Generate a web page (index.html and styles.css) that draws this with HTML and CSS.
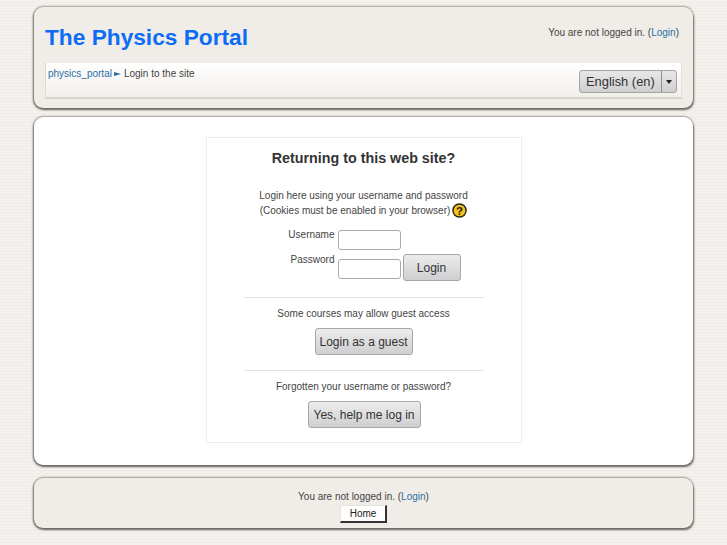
FILE: index.html
```html
<!DOCTYPE html>
<html lang="en">
<head>
<meta charset="utf-8">
<title>The Physics Portal: Login to the site</title>
<link rel="stylesheet" href="styles.css">
</head>
<body>
<header class="panel header">
  <div class="headermain">
    <h1 class="sitename">The Physics Portal</h1>
    <div class="logininfo">You are not logged in. (<a href="#">Login</a>)</div>
  </div>
  <div class="navbar">
    <div class="crumbs"><a href="#">physics_portal</a><span class="sep"></span>Login to the site</div>
    <div class="langmenu"><span class="langlabel">English (en)</span><span class="langarrow"><span class="caret"></span></span></div>
  </div>
</header>
<main class="panel content">
  <section class="loginbox">
    <h2 class="logintitle">Returning to this web site?</h2>
    <div class="intro">
      <p class="introline">Login here using your username and password</p>
      <p class="introline">(Cookies must be enabled in your browser)
        <svg class="helpicon" width="15" height="15" viewBox="0 0 16 16" aria-hidden="true">
          <circle cx="8" cy="8" r="7" fill="#f3c21f" stroke="#2b2412" stroke-width="1.5"/>
          <text x="8" y="12.5" text-anchor="middle" class="helpmark">?</text>
        </svg>
      </p>
    </div>
    <form class="loginform">
      <div class="labels">
        <label class="fieldlabel">Username</label>
        <label class="fieldlabel">Password</label>
      </div>
      <div class="inputs">
        <input class="field" type="text">
        <input class="field" type="password">
      </div>
      <button class="btn loginbtn" type="button">Login</button>
    </form>
    <hr class="rule">
    <p class="note">Some courses may allow guest access</p>
    <button class="btn guestbtn" type="button">Login as a guest</button>
    <hr class="rule rule2">
    <p class="note">Forgotten your username or password?</p>
    <button class="btn helpbtn" type="button">Yes, help me log in</button>
  </section>
</main>
<footer class="panel footer">
  <div class="logininfo">You are not logged in. (<a href="#">Login</a>)</div>
  <button class="homebtn" type="button">Home</button>
</footer>
</body>
</html>
```
FILE: styles.css
```css
html, body { margin: 0; padding: 0; }
body {
  height: 545px;
  overflow: hidden;
  box-sizing: border-box;
  padding: 7px 34px 0;
  background: repeating-linear-gradient(180deg, #f4f2ee 0 2px, #efece6 2px 3px);
  font-family: "Liberation Sans", Arial, sans-serif;
  font-size: 10px;
  color: #444;
}
a { color: #2a6fa8; text-decoration: none; }
.panel {
  box-sizing: border-box;
  border-radius: 9px;
  box-shadow: -1px 1px 2px #6f6d68, 1px 2px 2px #6f6d68, 0 -1px 2px #a5a29b;
}
.header { height: 101px; background: #f0ece7; padding: 0 14px 0 11px; }
.headermain { display: flex; justify-content: space-between; height: 56px; }
.sitename { margin: 16px 0 0; font-size: 22.7px; line-height: 28px; font-weight: bold; color: #0d6cf5; }
.logininfo { line-height: 13px; }
.header .logininfo { margin-top: 19px; }
.navbar {
  display: flex;
  justify-content: space-between;
  height: 36px;
  margin-right: -3px;
  box-sizing: border-box;
  background: linear-gradient(180deg, #fff 0%, #f2efea 100%);
  border-bottom: 2px solid #d6d3cd;
  border-left: 1px solid #dcd9d3;
  border-right: 1px solid #e4e1db;
}
.crumbs { display: flex; align-items: flex-start; padding: 4px 0 0 2px; line-height: 13px; }
.sep {
  width: 0; height: 0; margin: 5px 3px 0 2px;
  border-left: 7px solid #2a6fa8;
  border-top: 2.5px solid transparent;
  border-bottom: 2.5px solid transparent;
}
.langmenu {
  display: flex;
  align-self: flex-start;
  margin: 7px 4px 0 0;
  height: 23px;
  box-sizing: border-box;
  border: 1px solid #a5a5a5;
  border-radius: 3px;
  background: linear-gradient(180deg, #e8e8e8, #cfcfd0);
  font-size: 12.9px;
  line-height: 22px;
  color: #333;
}
.langlabel { padding: 0 6px; width: 81px; box-sizing: border-box; white-space: nowrap; }
.langarrow { width: 14px; border-left: 1px solid #8f8f8f; display: flex; align-items: center; justify-content: center; }
.caret { width: 0; height: 0; border: 3.5px solid transparent; border-top: 4px solid #222; border-bottom: 0; }
.content { margin-top: 9px; height: 348px; background: #fff; padding-top: 20px; }
.loginbox {
  box-sizing: border-box;
  width: 316px;
  height: 306px;
  margin: 0 auto;
  border: 1px solid #f1eee8;
  display: flex;
  flex-direction: column;
  align-items: center;
}
.logintitle { margin: 12px 0 0; font-size: 14.3px; line-height: 17px; font-weight: bold; color: #333; }
.intro { margin-top: 21px; text-align: center; }
.introline { margin: 0; line-height: 15px; display: flex; align-items: center; gap: 2px; justify-content: center; height: 15px; }
.helpicon { display: block; }
.helpmark { font: bold 12px "Liberation Sans", sans-serif; fill: #1c1608; }
.loginform { display: flex; align-items: flex-end; margin-top: 12px; width: 240px; }
.labels { width: 91px; text-align: right; align-self: flex-start; margin-top: -2px; }
.fieldlabel { display: block; line-height: 13px; height: 25px; }
.inputs { display: flex; flex-direction: column; gap: 9px; margin-left: 3px; margin-bottom: 2px; }
.field {
  box-sizing: border-box; width: 63px; height: 20px; margin: 0; padding: 0;
  border: 1px solid #aaa; border-radius: 3px; background: #fff;
}
.btn {
  box-sizing: border-box;
  height: 27px;
  padding: 0;
  border: 1px solid #a6a6a6;
  border-radius: 3px;
  background: linear-gradient(180deg, #ececec, #cfcfd1);
  font-family: "Liberation Sans", Arial, sans-serif;
  font-size: 12px;
  color: #333;
}
.loginbtn { width: 58px; margin-left: 2px; }
.guestbtn { width: 98px; }
.helpbtn { width: 113px; margin-left: 1px; }
.rule { width: 240px; margin: 16px 0 0; border: 0; border-top: 1px solid #e6e3dd; }
.rule2 { margin-top: 15px; }
.note { margin: 9px 0 0; line-height: 13px; height: 21px; }
.footer { margin-top: 13px; height: 50px; background: #f0ece7; display: flex; flex-direction: column; align-items: center; padding-top: 12px; }
.homebtn {
  box-sizing: border-box; width: 47px; height: 18px; margin-top: 2px; padding: 0;
  background: #fff; border: 1px solid #e6e3dd; border-right: 2px solid #333; border-bottom: 2px solid #333;
  font-family: "Liberation Sans", Arial, sans-serif; font-size: 10px; color: #222;
}
```
